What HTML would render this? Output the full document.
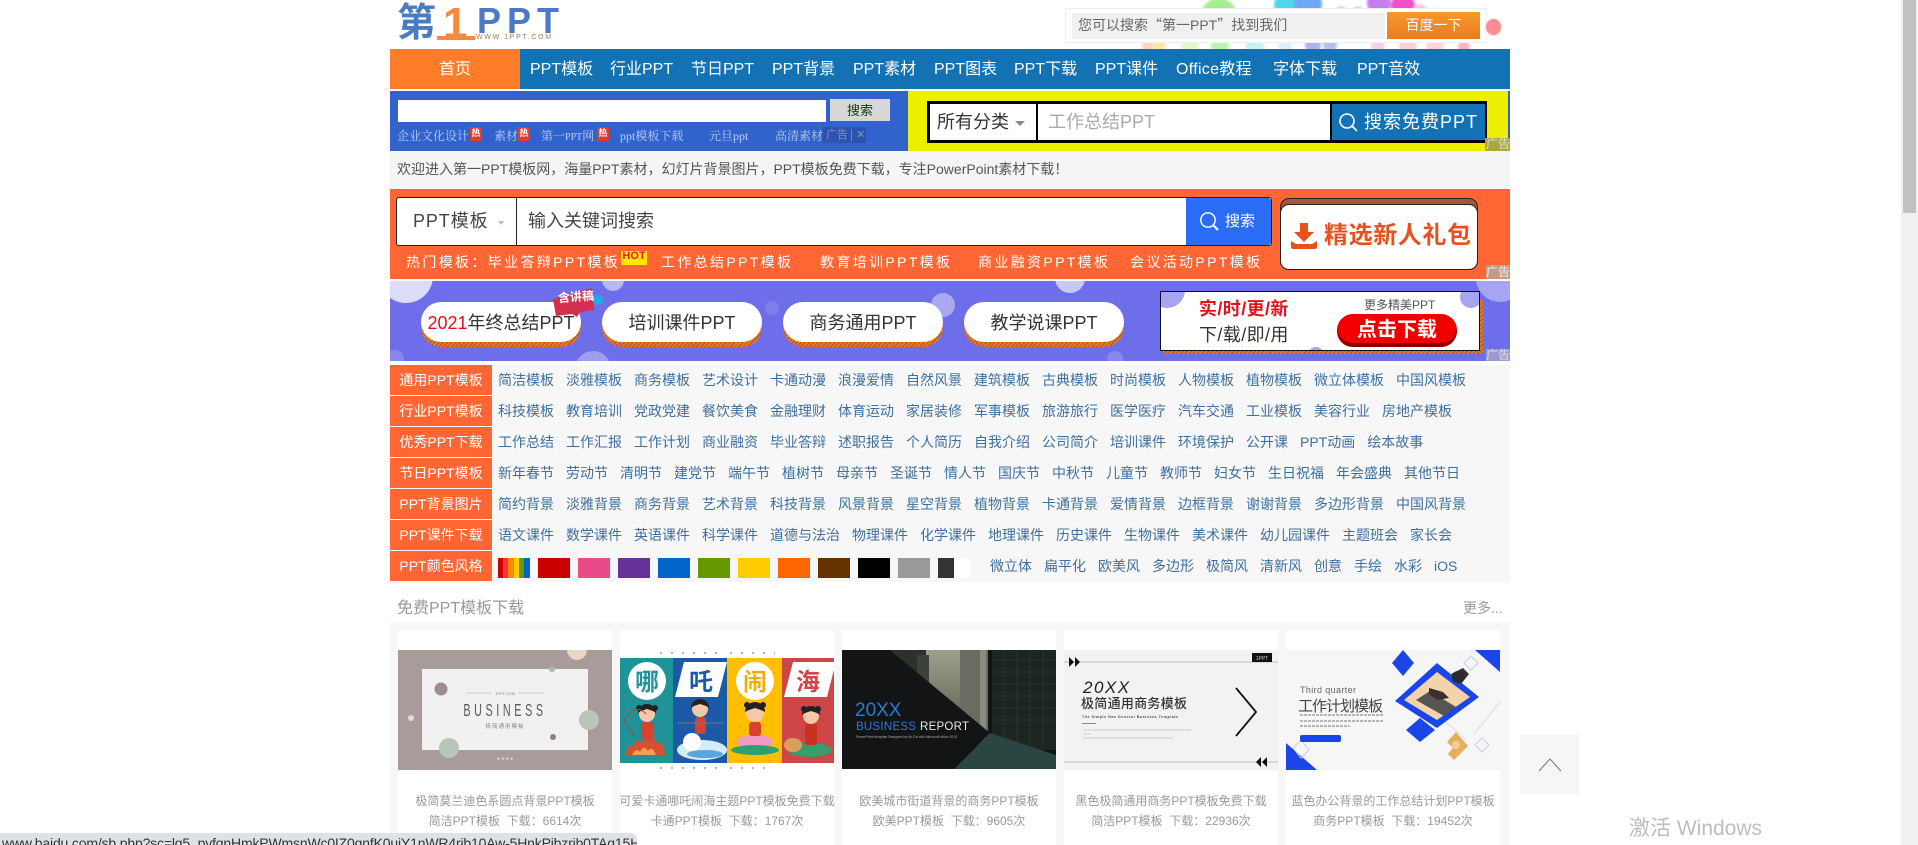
<!DOCTYPE html>
<html lang="zh"><head><meta charset="utf-8"><title>第1PPT</title>
<style>
*{margin:0;padding:0;box-sizing:border-box}
html,body{width:1918px;height:845px;overflow:hidden;background:#fff}
body{position:relative;font-family:"Liberation Sans","Noto Sans CJK SC",sans-serif;font-size:14px;color:#333}
.a{position:absolute;white-space:nowrap}
.nav{top:49px;height:40px;line-height:42px;color:#fff;font-size:16px}
.sm{top:127px;height:18px;line-height:18px;font-size:12px;color:#bcd0f2;font-family:"Liberation Serif","Noto Serif CJK SC",serif}
.re{width:12px;height:14px;background:#e03a2c;color:#fff;font-size:9px;line-height:13px;text-align:center;top:127px;font-weight:bold}
.hot{top:252px;height:20px;line-height:20px;font-size:14px;letter-spacing:2.35px;color:#fff}
.ph{top:306px;width:160px;height:41px;border-radius:20px;background:repeating-linear-gradient(135deg,#e87a22 0 2px,#a8552a 2px 3px)}
.pill{top:302px;width:160px;height:40px;border-radius:20px;background:#fff;text-align:center;line-height:42px;font-size:18px;color:#333}
.lab{left:390px;width:102px;height:30px;background:#FF6633;color:#fff;text-align:center;line-height:31px;font-size:14px}
.row{left:498px;height:20px;line-height:20px;font-size:14px;color:#3F6F9F;display:flex;gap:12px}
.sw{top:558px;width:32px;height:20px}
.card{top:630px;width:214px;height:215px;background:#fff}
.card svg{position:absolute;left:0;top:20px;display:block}
.t{position:absolute;left:-4px;width:222px;text-align:center;font-size:12px;color:#999;line-height:20px;top:161px;white-space:nowrap}
.m{top:181px}
text{font-family:"Liberation Sans","Noto Sans CJK SC",sans-serif}
</style></head><body>

<!-- balloons -->
<svg class="a" style="left:1130px;top:0" width="380" height="50">
<defs><filter id="b" x="-10%" y="-10%" width="120%" height="120%"><feGaussianBlur stdDeviation="1.3"/></filter></defs>
<g filter="url(#b)"><circle cx="89" cy="16" r="18" fill="#a5ec92"/><circle cx="162" cy="6" r="18" fill="#4fd8ec"/><circle cx="178" cy="4" r="14" fill="#6ea8f5"/><circle cx="211" cy="14" r="7" fill="#c8b8ef"/><circle cx="228" cy="14" r="7" fill="#c2b4f0"/><circle cx="249" cy="3" r="12" fill="#c77df0"/><circle cx="273" cy="6" r="12" fill="#f04fc8"/><circle cx="290" cy="12" r="8" fill="#f6c6d8"/><circle cx="30" cy="46" r="6" fill="#f9e8a0"/><circle cx="18" cy="46" r="6" fill="#f9d4c0"/><circle cx="60" cy="46" r="9" fill="#e5f7c8"/><circle cx="90" cy="46" r="9" fill="#b9f4b0"/><circle cx="125" cy="46" r="9" fill="#c8f2ee"/><circle cx="155" cy="46" r="7" fill="#d7f0fa"/><circle cx="183" cy="45" r="8" fill="#aab4ee"/><circle cx="200" cy="45" r="7" fill="#b9c0f0"/><circle cx="248" cy="46" r="7" fill="#f2d0ee"/><circle cx="278" cy="46" r="9" fill="#fbd3d6"/><circle cx="305" cy="46" r="9" fill="#fbd8d8"/><circle cx="334" cy="47" r="6" fill="#f7b6bc"/></g>
</svg>

<!-- logo -->
<div class="a" style="left:397px;top:1px;font-size:39px;line-height:46px;font-weight:bold;color:#4a7cc4">第</div>
<div class="a" style="left:443px;top:1px;font-size:44px;line-height:46px;font-weight:bold;color:#f58a3c">1</div>
<div class="a" style="left:437px;top:36px;width:38px;height:4px;background:#f58a3c"></div>
<div class="a" style="left:477px;top:1px;font-size:36px;line-height:40px;font-weight:bold;letter-spacing:6px;color:#4d78c2">PPT</div>
<div class="a" style="left:476px;top:34px;font-size:7px;line-height:8px;letter-spacing:1.7px;color:#a77a55">WWW.1PPT.COM</div>

<!-- top search -->
<div class="a" style="left:1065px;top:8px;width:422px;height:35px;background:#fff;border:1px solid #eee"></div>
<div class="a" style="left:1072px;top:13px;width:313px;height:26px;background:#f0f0f0;color:#666;font-size:14px;line-height:25px;padding-left:6px">您可以搜索<span style="font-family:'Noto Sans CJK SC',sans-serif;display:inline-block;width:14px;text-align:right">“</span>第一PPT<span style="font-family:'Noto Sans CJK SC',sans-serif;display:inline-block;width:14px;text-align:left">”</span>找到我们</div>
<div class="a" style="left:1387px;top:12px;width:93px;height:27px;background:linear-gradient(#f39a2c,#ee7a1e);color:#fff;text-align:center;font-size:14px;line-height:27px">百度一下</div>
<div class="a" style="left:1486px;top:19px;width:15px;height:16px;border-radius:50%;background:#fb8c96;box-shadow:0 0 2px #fbb"></div>

<!-- nav -->
<div class="a" style="left:390px;top:49px;width:1120px;height:40px;background:#1272B4"></div>
<div class="a nav" style="left:390px;width:130px;background:#FF7C2A;text-align:center">首页</div>
<div class="a nav" style="left:530px">PPT模板</div>
<div class="a nav" style="left:610px">行业PPT</div>
<div class="a nav" style="left:691px">节日PPT</div>
<div class="a nav" style="left:772px">PPT背景</div>
<div class="a nav" style="left:853px">PPT素材</div>
<div class="a nav" style="left:934px">PPT图表</div>
<div class="a nav" style="left:1014px">PPT下载</div>
<div class="a nav" style="left:1095px">PPT课件</div>
<div class="a nav" style="left:1176px;letter-spacing:.3px">Office教程</div>
<div class="a nav" style="left:1273px">字体下载</div>
<div class="a nav" style="left:1357px">PPT音效</div>

<!-- ad row -->
<div class="a" style="left:390px;top:91px;width:518px;height:60px;background:#3262CC"></div>
<div class="a" style="left:908px;top:91px;width:602px;height:60px;background:#EEEE00"></div>
<div class="a" style="left:1508px;top:91px;width:2px;height:48px;background:#3262CC"></div>
<div class="a" style="left:398px;top:100px;width:428px;height:22px;background:#fff"></div>
<div class="a" style="left:830px;top:99px;width:60px;height:22px;background:#d8d8d8;text-align:center;color:#143a14;font-size:13px;line-height:23px">搜索</div>
<div class="a sm" style="left:397px">企业文化设计</div><div class="a re" style="left:470px">热</div>
<div class="a sm" style="left:494px">素材</div><div class="a re" style="left:518px">热</div>
<div class="a sm" style="left:541px">第一<span style="font-size:10px">PPT</span>网</div><div class="a re" style="left:597px">热</div>
<div class="a sm" style="left:620px">ppt模板下载</div>
<div class="a sm" style="left:709px">元旦ppt</div>
<div class="a sm" style="left:775px">高清素材</div>
<div class="a" style="left:823px;top:127px;width:43px;height:16px;background:rgba(30,50,110,.3);color:#7d94c8;font-size:11px;line-height:16px;padding-left:3px">广告 <span style="border-left:1px solid #6b85bd;padding-left:4px">✕</span></div>

<div class="a" style="left:928px;top:102px;width:558px;height:40px;border:2px solid #000;background:#fff;outline:1px solid #000"></div>
<div class="a" style="left:937px;top:104px;height:36px;font-size:18px;line-height:37px;color:#333">所有分类</div>
<div class="a" style="left:1015px;top:121px;width:0;height:0;border:5px solid transparent;border-top:5px solid #888;border-bottom:0"></div>
<div class="a" style="left:1036px;top:104px;width:2px;height:36px;background:#000"></div>
<div class="a" style="left:1048px;top:104px;height:36px;font-size:18px;line-height:37px;color:#aaa">工作总结PPT</div>
<div class="a" style="left:1330px;top:104px;width:155px;height:36px;background:#1272B4;border-left:2px solid #000;color:#fff;font-size:18px;line-height:37px;letter-spacing:1px;padding-left:32px">搜索免费PPT</div>
<svg class="a" style="left:1338px;top:112px" width="22" height="22" fill="none" stroke="#fff" stroke-width="1.6"><circle cx="9" cy="9" r="7"/><path d="M14 14l5 5"/></svg>
<div class="a" style="left:1485px;top:138px;width:25px;height:13px;background:#a8a838;color:#ddd;font-size:12px;line-height:13px;text-align:right">广告</div>

<!-- welcome -->
<div class="a" style="left:390px;top:151px;width:1120px;height:37px;background:#f5f5f5;color:#555;font-size:14px;line-height:36px;padding-left:7px">欢迎进入第一PPT模板网，海量PPT素材，幻灯片背景图片，PPT模板免费下载，专注PowerPoint素材下载！</div>

<!-- orange block -->
<div class="a" style="left:390px;top:189px;width:1120px;height:90px;background:#FF6633"></div>
<div class="a" style="left:396px;top:197px;width:876px;height:49px;background:#fff;border:1px solid #222;border-radius:3px"></div>
<div class="a" style="left:413px;top:197px;height:49px;font-size:18px;line-height:49px;color:#444;letter-spacing:.9px">PPT模板</div>
<div class="a" style="left:498px;top:221px;width:0;height:0;border:3px solid transparent;border-top:4px solid #bbb;border-bottom:0"></div>
<div class="a" style="left:516px;top:197px;width:1px;height:49px;background:#222"></div>
<div class="a" style="left:528px;top:197px;height:49px;font-size:18px;line-height:49px;color:#444">输入关键词搜索</div>
<div class="a" style="left:1186px;top:198px;width:85px;height:47px;background:#2B6CF6;border-radius:0 3px 3px 0;color:#fff;font-size:15px;line-height:47px;padding-left:39px">搜索</div>
<svg class="a" style="left:1199px;top:211px" width="22" height="22" fill="none" stroke="#fff" stroke-width="1.4"><circle cx="9" cy="9" r="7.2"/><path d="M14 14l5 5" stroke-width="2"/></svg>
<div class="a hot" style="left:406px">热门模板：毕业答辩PPT模板</div>
<div class="a" style="left:621px;top:251px;width:26px;height:14px;background:#ffe600;color:#e02020;font-size:11px;line-height:11px;font-weight:bold;text-align:center">HOT</div>
<div class="a hot" style="left:661px">工作总结PPT模板</div>
<div class="a hot" style="left:820px">教育培训PPT模板</div>
<div class="a hot" style="left:978px">商业融资PPT模板</div>
<div class="a hot" style="left:1130px">会议活动PPT模板</div>
<div class="a" style="left:1280px;top:198px;width:198px;height:72px;background:#A9553A;border:1px solid #222;border-radius:9px"></div>
<div class="a" style="left:1280px;top:204px;width:198px;height:66px;background:#fff;border:1px solid #222;border-radius:9px;color:#E8501E;font-size:24px;font-weight:bold;line-height:62px;padding-left:43px;letter-spacing:.6px">精选新人礼包</div>
<svg class="a" style="left:1290px;top:222px" width="28" height="28"><path d="M10 1h8v9h6l-10 10L4 10h6z" fill="#E8501E"/><path d="M1 19v6a2 2 0 002 2h22a2 2 0 002-2v-6l-5 3H6z" fill="#E8501E"/></svg>
<div class="a" style="left:1486px;top:265px;width:24px;height:14px;background:#c69a7e;color:#eee;font-size:12px;line-height:14px;text-align:right">广告</div>

<!-- purple banner -->
<div class="a" style="left:390px;top:281px;width:1120px;height:80px;background:#6F6EEA;overflow:hidden">
<svg width="1120" height="80"><g fill="#fff"><circle cx="16" cy="-5" r="27" fill="#dcdcf8"/><circle cx="223" cy="-1" r="11" fill="#b7b7f2"/><circle cx="203" cy="88" r="18" fill="#9f9ff0"/><circle cx="553" cy="24" r="12" fill="#a9a9f2"/><circle cx="382" cy="27" r="7" fill="#7f7fec"/><circle cx="680" cy="-3" r="15" fill="#c8c8f6"/><circle cx="1110" cy="-3" r="24" fill="#a5a5f3"/><circle cx="5" cy="78" r="9" fill="#8888ee"/><circle cx="725" cy="78" r="8" fill="#8888ee"/></g></svg>
</div>
<div class="a ph" style="left:421px"></div><div class="a ph" style="left:602px"></div><div class="a ph" style="left:783px"></div><div class="a ph" style="left:964px"></div>
<div class="a pill" style="left:421px"><span style="color:#e01020">2021</span>年终总结PPT</div>
<div class="a pill" style="left:602px">培训课件PPT</div>
<div class="a pill" style="left:783px">商务通用PPT</div>
<div class="a pill" style="left:964px">教学说课PPT</div>
<svg class="a" style="left:552px;top:282px" width="72" height="40"><path d="M1 17L40 6l2 22-14 2-3 5-5-3-16 2z" fill="#d32f4f"/><circle cx="46" cy="18" r="5" fill="#19aee0"/></svg>
<div class="a" style="left:558px;top:289px;color:#fff;font-size:12px;font-weight:bold;line-height:16px;transform:rotate(-4deg)">含讲稿</div>
<div class="a" style="left:1163px;top:300px;width:320px;height:54px;background:repeating-linear-gradient(135deg,#e87a22 0 2px,#a8552a 2px 3px)"></div>
<div class="a" style="left:1160px;top:291px;width:320px;height:60px;background:#fff;border:1px solid #111;overflow:hidden">
<svg class="a" width="320" height="60" style="left:0;top:0"><circle cx="6" cy="-2" r="18" fill="#a6a6f0"/><circle cx="310" cy="5" r="11" fill="#a6a6f0"/><circle cx="155" cy="63" r="8" fill="#a6a6f0"/></svg>
</div>
<div class="a" style="left:1199px;top:296px;font-size:18px;line-height:26px;color:#e8101c;font-weight:bold;letter-spacing:.4px">实/时/更/新</div>
<div class="a" style="left:1199px;top:322px;font-size:18px;line-height:26px;color:#333;letter-spacing:.4px">下/载/即/用</div>
<div class="a" style="left:1364px;top:296px;font-size:12px;line-height:18px;color:#555">更多精美PPT</div>
<div class="a" style="left:1337px;top:314px;width:120px;height:33px;border-radius:16px;background:#f20000;box-shadow:inset 0 -4px 0 #8c0000;color:#fff;font-size:20px;font-weight:bold;line-height:33px;text-align:center">点击下载</div>
<div class="a" style="left:1486px;top:349px;width:24px;height:12px;background:#9a9ad0;color:#ddd;font-size:12px;line-height:12px;text-align:right">广告</div>

<!-- category -->
<div class="a" style="left:390px;top:365px;width:1120px;height:217px;background:#f7f7f7"></div>
<div class="a lab" style="top:365px">通用PPT模板</div>
<div class="a lab" style="top:396px">行业PPT模板</div>
<div class="a lab" style="top:427px">优秀PPT下载</div>
<div class="a lab" style="top:458px">节日PPT模板</div>
<div class="a lab" style="top:489px">PPT背景图片</div>
<div class="a lab" style="top:520px">PPT课件下载</div>
<div class="a lab" style="top:551px">PPT颜色风格</div>
<div class="a row" style="top:370px"><span>简洁模板</span><span>淡雅模板</span><span>商务模板</span><span>艺术设计</span><span>卡通动漫</span><span>浪漫爱情</span><span>自然风景</span><span>建筑模板</span><span>古典模板</span><span>时尚模板</span><span>人物模板</span><span>植物模板</span><span>微立体模板</span><span>中国风模板</span></div>
<div class="a row" style="top:401px"><span>科技模板</span><span>教育培训</span><span>党政党建</span><span>餐饮美食</span><span>金融理财</span><span>体育运动</span><span>家居装修</span><span>军事模板</span><span>旅游旅行</span><span>医学医疗</span><span>汽车交通</span><span>工业模板</span><span>美容行业</span><span>房地产模板</span></div>
<div class="a row" style="top:432px"><span>工作总结</span><span>工作汇报</span><span>工作计划</span><span>商业融资</span><span>毕业答辩</span><span>述职报告</span><span>个人简历</span><span>自我介绍</span><span>公司简介</span><span>培训课件</span><span>环境保护</span><span>公开课</span><span>PPT动画</span><span>绘本故事</span></div>
<div class="a row" style="top:463px"><span>新年春节</span><span>劳动节</span><span>清明节</span><span>建党节</span><span>端午节</span><span>植树节</span><span>母亲节</span><span>圣诞节</span><span>情人节</span><span>国庆节</span><span>中秋节</span><span>儿童节</span><span>教师节</span><span>妇女节</span><span>生日祝福</span><span>年会盛典</span><span>其他节日</span></div>
<div class="a row" style="top:494px"><span>简约背景</span><span>淡雅背景</span><span>商务背景</span><span>艺术背景</span><span>科技背景</span><span>风景背景</span><span>星空背景</span><span>植物背景</span><span>卡通背景</span><span>爱情背景</span><span>边框背景</span><span>谢谢背景</span><span>多边形背景</span><span>中国风背景</span></div>
<div class="a row" style="top:525px"><span>语文课件</span><span>数学课件</span><span>英语课件</span><span>科学课件</span><span>道德与法治</span><span>物理课件</span><span>化学课件</span><span>地理课件</span><span>历史课件</span><span>生物课件</span><span>美术课件</span><span>幼儿园课件</span><span>主题班会</span><span>家长会</span></div>
<div class="a sw" style="left:498px;background:linear-gradient(90deg,#c00 0 16%,#f33 16% 32%,#f80 32% 50%,#fc0 50% 66%,#690 66% 82%,#06c 82%)"></div>
<div class="a sw" style="left:538px;background:#c00"></div>
<div class="a sw" style="left:578px;background:#e84c88"></div>
<div class="a sw" style="left:618px;background:#639"></div>
<div class="a sw" style="left:658px;background:#06c"></div>
<div class="a sw" style="left:698px;background:#690"></div>
<div class="a sw" style="left:738px;background:#fc0"></div>
<div class="a sw" style="left:778px;background:#f60"></div>
<div class="a sw" style="left:818px;background:#630"></div>
<div class="a sw" style="left:858px;background:#000"></div>
<div class="a sw" style="left:898px;background:#999"></div>
<div class="a sw" style="left:938px;background:linear-gradient(90deg,#333 0 50%,#fff 50%)"></div>
<div class="a row" style="top:556px;left:990px"><span>微立体</span><span>扁平化</span><span>欧美风</span><span>多边形</span><span>极简风</span><span>清新风</span><span>创意</span><span>手绘</span><span>水彩</span><span>iOS</span></div>

<!-- list -->
<div class="a" style="left:397px;top:599px;font-size:16px;line-height:20px;color:#999">免费PPT模板下载</div>
<div class="a" style="left:1463px;top:598px;font-size:14px;line-height:20px;color:#999">更多...</div>
<div class="a" style="left:390px;top:622px;width:1120px;height:223px;background:#f7f7f7"></div>

<div class="a card" style="left:398px">
<svg width="214" height="120"><rect width="214" height="120" fill="#a89c9b"/><rect x="24" y="19" width="166" height="81" fill="#f1f1f1"/><circle cx="179" cy="0" r="10" fill="#e8d5c5"/><circle cx="43" cy="39" r="6.5" fill="#9f8d8c"/><circle cx="51" cy="98" r="10" fill="#b8c4bc"/><circle cx="191" cy="70" r="10" fill="#b8c4bc"/><circle cx="13" cy="68" r="3" fill="#f0d8c8"/><circle cx="155" cy="87" r="3" fill="#8a7f7e"/><circle cx="154" cy="19" r="3" fill="#a8b8b0"/><path d="M68 43h26M120 43h26" stroke="#aaa" stroke-width=".6"/><text x="107" y="45" font-size="4" fill="#888" text-anchor="middle">1PPT.COM</text><text transform="translate(107 66) scale(.6 1)" font-size="18" fill="#5a5a5a" text-anchor="middle" letter-spacing="6">BUSINESS</text><text x="107" y="78" font-size="5.500" fill="#888" text-anchor="middle" letter-spacing="1">极简通用模板</text><text x="107" y="110" font-size="5" fill="#e8dcd8" text-anchor="middle">● ● ● ●</text></svg>
<div class="t">极简莫兰迪色系圆点背景PPT模板</div><div class="t m">简洁PPT模板&nbsp; 下载：6614次</div></div>

<div class="a card" style="left:620px">
<svg width="214" height="120"><rect y="8" width="53" height="105" fill="#1F9397"/><rect x="53" y="8" width="54" height="105" fill="#1C5AA8"/><rect x="107" y="8" width="55" height="105" fill="#FFBE00"/><rect x="162" y="8" width="52" height="105" fill="#CD4648"/>
<circle cx="27" cy="31" r="19" fill="#fff"/><path d="M64 12h43l-9 35H55z" fill="#fff"/><circle cx="135" cy="31" r="19" fill="#fff"/><path d="M173 12h43l-9 35h-43z" fill="#fff"/>
<text x="27" y="40" font-size="24" font-weight="bold" fill="#1F9397" text-anchor="middle">哪</text><text x="81" y="40" font-size="24" font-weight="bold" fill="#1C5AA8" text-anchor="middle">吒</text><text x="135" y="40" font-size="24" font-weight="bold" fill="#eab000" text-anchor="middle">闹</text><text x="188" y="40" font-size="24" font-weight="bold" fill="#CD4648" text-anchor="middle">海</text>
<path d="M6 105q2-14 8-8 2-12 8-3 4-12 8-2 4-10 7 2 6-6 8 11z" fill="#d8512c"/><path d="M12 105q4-8 8-3 4-8 8-1 4-6 8 4z" fill="#f0a050"/><circle cx="27" cy="64" r="8" fill="#f4c8a8"/><path d="M18 63a9 9 0 0118 0l-3-2-6-2-6 2z" fill="#222"/><circle cx="19" cy="58" r="3" fill="#222"/><circle cx="35" cy="58" r="3" fill="#222"/><rect x="21" y="72" width="12" height="17" rx="3" fill="#d8412c"/><path d="M4 70q12-18 22-6M4 70l10 16" stroke="#b04040" fill="none"/>
<ellipse cx="82" cy="100" rx="25" ry="10" fill="#d3ecf7"/><ellipse cx="72" cy="92" rx="9" ry="9" fill="#fff"/><ellipse cx="85" cy="104" rx="18" ry="4" fill="#5aa5de"/><circle cx="80" cy="59" r="8" fill="#f4c8a8"/><path d="M71 58a9 9 0 0118 0l-3-2-6-2-6 2z" fill="#222"/><rect x="75" y="67" width="11" height="17" rx="3" fill="#d8412c"/><path d="M58 73h46" stroke="#777"/>
<ellipse cx="135" cy="92" rx="18" ry="7" fill="#ef9cc4"/><ellipse cx="135" cy="100" rx="24" ry="5" fill="#2f9f6f"/><circle cx="135" cy="63" r="9" fill="#f4c8a8"/><path d="M125 62a10 10 0 0120 0l-4-2-6-2-6 2z" fill="#222"/><circle cx="127" cy="55" r="3" fill="#222"/><circle cx="143" cy="55" r="3" fill="#222"/><rect x="129" y="72" width="12" height="14" rx="3" fill="#d8412c"/>
<ellipse cx="190" cy="100" rx="22" ry="7" fill="#3a9c68"/><circle cx="191" cy="66" r="8" fill="#f4c8a8"/><path d="M182 65a9 9 0 0118 0l-3-2-6-2-6 2z" fill="#222"/><circle cx="184" cy="59" r="3" fill="#222"/><circle cx="198" cy="59" r="3" fill="#222"/><rect x="185" y="74" width="12" height="21" rx="3" fill="#c83020"/><ellipse cx="173" cy="95" rx="9" ry="7" fill="#d8a060"/>
<path d="M40 3h62M110 3h45M40 118h62M110 118h40" stroke="#999" stroke-width="1.5" stroke-dasharray="2 9"/></svg>
<div class="t">可爱卡通哪吒闹海主题PPT模板免费下载</div><div class="t m">卡通PPT模板&nbsp; 下载：1767次</div></div>

<div class="a card" style="left:842px">
<svg width="214" height="120"><defs><linearGradient id="g3" x1="0" y1="0" x2="0" y2="1"><stop offset="0" stop-color="#a0a08e"/><stop offset="1" stop-color="#5d5e50"/></linearGradient></defs><rect width="214" height="119" fill="#111315"/><rect x="82" width="40" height="80" fill="url(#g3)"/><rect x="48" width="36" height="90" fill="#2c312c"/><rect x="75" y="5" width="12" height="70" fill="#3d413a"/><rect x="118" width="28" height="95" fill="#6a6c62"/><rect x="138" width="6" height="90" fill="#8a8c82"/><rect x="150" width="64" height="100" fill="#1d2520"/><path d="M150 10h64M150 22h64M150 34h64M150 46h64M150 58h64M150 70h64M162 0v95M175 0v95M188 0v95M201 0v95" stroke="#2d3a32" stroke-width=".8"/><path d="M148 83l66 22v14H112z" fill="#2b4642"/><path d="M0 0h48l100 83-36 36H0z" fill="#121416"/><text x="13" y="66" font-size="19" fill="#2a7ad2">20XX</text><text x="14" y="80" font-size="11.500" fill="#2a7ad2" textLength="60">BUSINESS</text><text x="78" y="80" font-size="11.500" fill="#e8e8e8" textLength="49">REPORT</text><text x="14" y="88" font-size="3.400" fill="#aaa">PowerPoint template Designed by Mr.Cai with Microsoft office 2019</text></svg>
<div class="t">欧美城市街道背景的商务PPT模板</div><div class="t m">欧美PPT模板&nbsp; 下载：9605次</div></div>

<div class="a card" style="left:1064px">
<svg width="214" height="120"><rect width="214" height="120" fill="#f2f2f2"/><path d="M0 12h214M0 112h214" stroke="#aaa" stroke-width=".7"/><path d="M5 7l5 5-5 5zM11 7l5 5-5 5z" fill="#111"/><path d="M197 107l-5 5 5 5zM203 107l-5 5 5 5z" fill="#111"/><rect x="188" y="3" width="20" height="9" fill="#111"/><text x="198" y="10" font-size="5" fill="#ccc" text-anchor="middle">1PPT</text><text x="19" y="43" font-size="17" font-style="italic" letter-spacing="1.5" fill="#222">20XX</text><text x="17" y="58" font-size="13" font-weight="500" fill="#333" textLength="106">极简通用商务模板</text><text x="18" y="68" font-size="3.500" letter-spacing=".6" font-weight="bold" fill="#444">The Simple Has General Business Template</text><path d="M18 73.500h14" stroke="#888"/><path d="M19 80h108M19 84h8M19 88h90" stroke="#ccc" stroke-width="1"/><path d="M172 38l20 24-20 24" fill="none" stroke="#111" stroke-width="1.800"/></svg>
<div class="t">黑色极简通用商务PPT模板免费下载</div><div class="t m">简洁PPT模板&nbsp; 下载：22936次</div></div>

<div class="a card" style="left:1286px">
<svg width="214" height="120"><rect width="214" height="120" fill="#f6f6f7"/><path d="M214 0v22L189 0z" fill="#1a46e8"/><path d="M0 93L31 120H0z" fill="#1a46e8"/><path d="M117 0l11 13-11 13-11-13z" fill="#1a46e8"/><path d="M109 51l42-38 42 34-42 31z" fill="#1a46e8"/><path d="M118 50l33-28 33 25-33 23z" fill="#f2d4a8"/><path d="M130 50l14-9 26 16-12 9z" fill="#555"/><path d="M143 38l14 4 6 6-12 2-8-6z" fill="#3a3030"/><path d="M165 24l12-6 6 6-8 10z" fill="#333"/><circle cx="172" cy="27" r="6" fill="#2a2a2a"/><path d="M134 68l15 12-15 12-14-12z" fill="#1a46e8"/><path d="M170 82l12 14-14 14-6-6 5-6-6-6z" fill="#e2b060"/><circle cx="170" cy="95" r="4" fill="#f0d090"/><path d="M196 88l7 7-7 7-7-7zM185 6l7 7-7 7-7-7z" fill="none" stroke="#c4cdea"/><path d="M214 52l-26 32M160 72l20 18" stroke="#d4daf0" fill="none"/><path d="M15 90l-8 8 8 10 8-8z" fill="none" stroke="#c4cdea"/><text x="14" y="43" font-size="9" fill="#666" textLength="56">Third quarter</text><text x="12" y="61" font-size="15" fill="#444" textLength="86" letter-spacing="1">工作计划模板</text><path d="M14 65h84M14 71h84M14 76h50" stroke="#a0a0a0" stroke-width="1.400" stroke-dasharray="3 1"/><rect x="14" y="85" width="41" height="7" rx="2" fill="#1a46e8"/></svg>
<div class="t">蓝色办公背景的工作总结计划PPT模板</div><div class="t m">商务PPT模板&nbsp; 下载：19452次</div></div>

<!-- back to top -->
<div class="a" style="left:1520px;top:735px;width:59px;height:59px;background:#f6f6f6"></div>
<svg class="a" style="left:1537px;top:757px" width="26" height="16" fill="none" stroke="#777" stroke-width="1"><path d="M2 14L13 2l11 12"/></svg>

<!-- watermark -->
<div class="a" style="left:1629px;top:815px;font-size:21px;line-height:28px;color:#bdbdbd">激活 Windows</div>

<!-- scrollbar -->
<div class="a" style="left:1901px;top:0;width:17px;height:845px;background:#f1f1f1"></div>
<div class="a" style="left:1903px;top:0;width:13px;height:213px;background:#c1c1c1"></div>

<!-- status bubble -->
<div class="a" style="left:0;top:833px;width:637px;height:12px;background:#dee1e6;border-radius:0 6px 0 0;overflow:hidden;font-size:14px;line-height:21px;color:#333;padding-left:2px;letter-spacing:-.17px">www.baidu.com/sb.php?sc=lg5_pyfqnHmkPWmsnWc0IZ0qnfK0uiY1nWR4rjb10Aw-5HnkPjbzrjb0TAq15HmY</div>
</body></html>
